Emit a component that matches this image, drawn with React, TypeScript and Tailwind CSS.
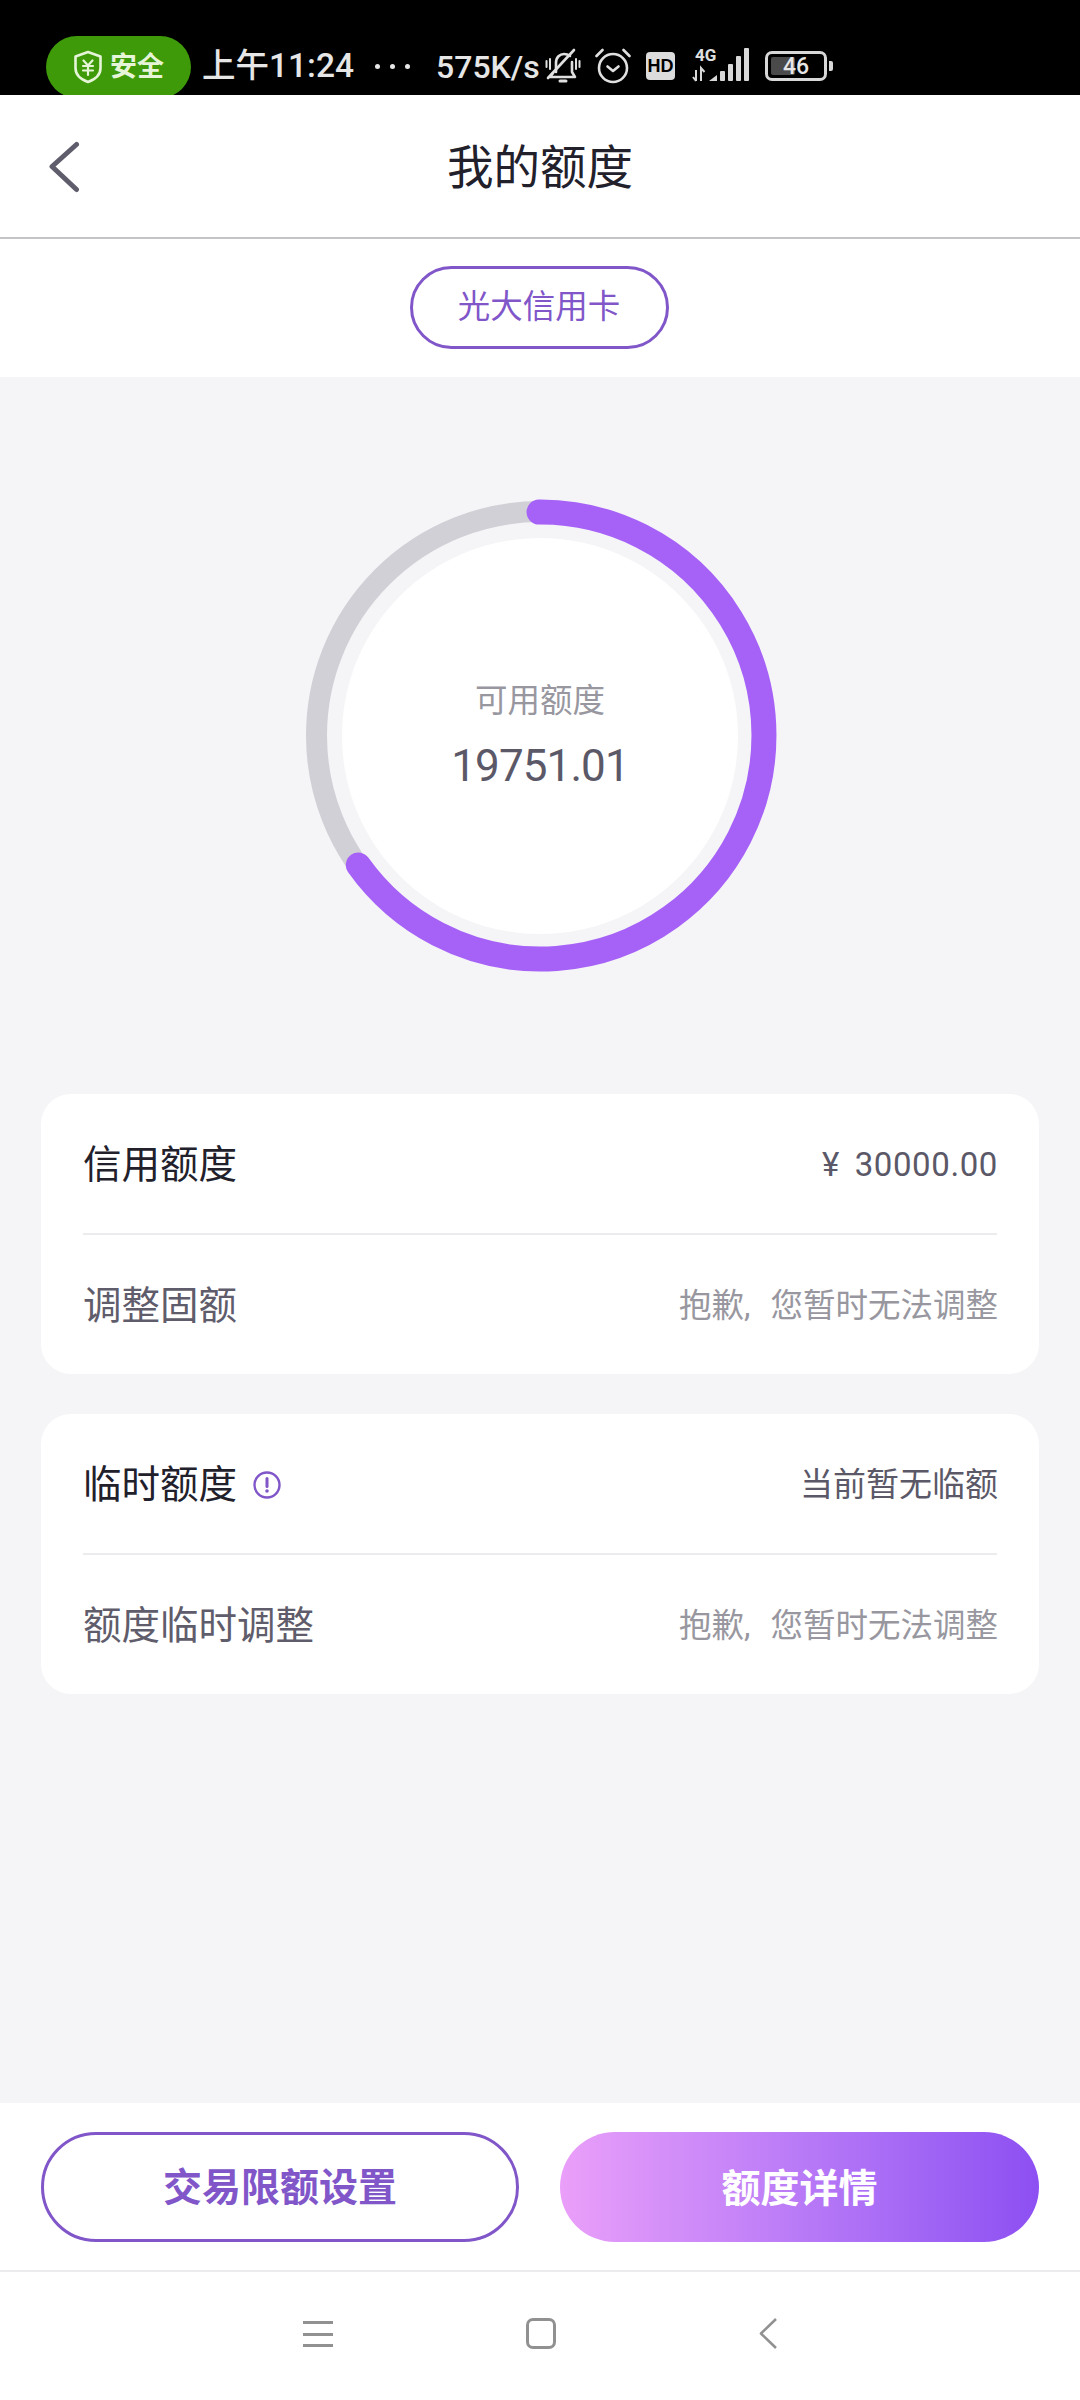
const purple = "#8056c9";

const StatusBar = () => {
    return (
        <div className="h-[95px] bg-black flex items-start overflow-hidden text-[#e6e6e6] shrink-0">
            <div className="mt-[36px] ml-[46px] w-[145px] h-[62px] rounded-[31px] bg-[#3f9a0a] flex items-center justify-center gap-[7px] text-[#e6f5d8]">
                <svg width="30" height="34" viewBox="0 0 30 34" fill="none" stroke="#e6f5d8" strokeWidth="2.6" strokeLinejoin="round" strokeLinecap="round">
                    <path d="M15 2 L27.5 6.5 V18 C27.5 25 22 29.5 15 32 C8 29.5 2.5 25 2.5 18 V6.5 Z" />
                    <path d="M10.5 10.5 L15 15.5 L19.5 10.5 M10 16 H20 M10 20.5 H20 M15 15.5 V25" strokeWidth="2.2" />
                </svg>
                <span className="text-[27px] font-bold leading-none">安全</span>
            </div>
            <span className="ml-[11px] mt-[43px] w-[151px] text-[33.5px] leading-[46px] font-medium whitespace-nowrap">上午11:24</span>
            <div className="ml-[22px] mt-[64px] flex gap-[10px]">
                <div className="w-[5px] h-[5px] rounded-full bg-[#e6e6e6]"></div>
                <div className="w-[5px] h-[5px] rounded-full bg-[#e6e6e6]"></div>
                <div className="w-[5px] h-[5px] rounded-full bg-[#e6e6e6]"></div>
            </div>
            <span className="ml-[26px] mt-[46px] w-[109px] text-[32px] leading-[42px] font-medium whitespace-nowrap">575K/s</span>

            {/* bell off */}
            <svg className="mt-[48px] ml-[0px]" width="36" height="36" viewBox="0 0 36 36" fill="none" stroke="#e0e0e0" strokeWidth="2.6" strokeLinecap="round" strokeLinejoin="round">
                <path d="M11 24 V15 C11 9 15 6 19 6 C21 6 23 6.5 25 8 M27 14 V24 L30 29 H5 L8 25" />
                <path d="M29 2 L3 30" />
                <path d="M15 33 H21" strokeWidth="3" />
                <path d="M1.5 13 V19 M5 11 V21 M31 11 V21 M34.5 13 V19" strokeWidth="2" />
            </svg>

            {/* alarm */}
            <svg className="mt-[48px] ml-[14px]" width="36" height="36" viewBox="0 0 36 36" fill="none" stroke="#e0e0e0" strokeWidth="2.6" strokeLinecap="round" strokeLinejoin="round">
                <circle cx="18" cy="20" r="14" />
                <path d="M12.5 18.5 L18 23 L23.5 18.5" />
                <path d="M1.5 8 L7.5 2 M34.5 8 L28.5 2" />
            </svg>

            <div className="mt-[52px] ml-[15px] w-[29px] h-[28px] rounded-[4px] bg-[#dcdcdc] text-black text-[18px] leading-[28px] font-bold text-center font-['Liberation_Sans',sans-serif]">HD</div>

            {/* 4G + signal */}
            <div className="mt-[48px] ml-[17px] w-[58px] h-[34px] relative">
                <span className="absolute left-[3px] top-[-2px] text-[17px] leading-[18px] font-bold text-[#e0e0e0]">4G</span>
                <svg className="absolute left-0 top-0" width="58" height="34" viewBox="0 0 58 34" fill="none">
                    <path d="M4 22 V33 M1 29 L4 33 M9 33 V20 L12.5 24" stroke="#d8d8d8" strokeWidth="2" />
                    <path d="M17 33 L25 27 V33 Z" fill="#d8d8d8" />
                    <rect x="28" y="23" width="5" height="10" rx="1" fill="#d8d8d8" />
                    <rect x="36" y="16" width="5" height="17" rx="1" fill="#d8d8d8" />
                    <rect x="44" y="8" width="5" height="25" rx="1" fill="#d8d8d8" />
                    <rect x="52" y="0" width="5" height="33" rx="1" fill="#d8d8d8" />
                </svg>
            </div>

            {/* battery */}
            <div className="mt-[51px] ml-[15px] w-[62px] h-[30px] rounded-[7px] border-[3px] border-[#d8d8d8] relative flex items-center justify-center">
                <div className="absolute left-[3px] top-[3px] bottom-[3px] w-[24px] rounded-[2px] bg-[#4a4a4a]"></div>
                <span className="relative text-[23px] leading-none font-medium text-[#e6e6e6]">46</span>
            </div>
            <div className="mt-[61px] ml-[2px] w-[4px] h-[10px] rounded-r-[2px] bg-[#d8d8d8]"></div>
        </div>
    );
};

const InfoIcon = () => {
    return (
        <svg width="28" height="28" viewBox="0 0 28 28" fill="none">
            <circle cx="14" cy="14" r="12.5" stroke={purple} strokeWidth="2.4" />
            <path d="M14 7.5 V15.5" stroke={purple} strokeWidth="3" strokeLinecap="round" />
            <circle cx="14" cy="20" r="1.8" fill={purple} />
        </svg>
    );
};

const Gauge = () => {
    return (
        <div className="relative w-[473px] h-[473px] mx-auto flex items-center justify-center">
            <svg className="absolute inset-0" width="473" height="473" viewBox="0 0 473 473" fill="none">
                <circle cx="236.5" cy="236.5" r="224" stroke="#d1d0d6" strokeWidth="21" />
                <path d="M235 13 A223.5 223.5 0 1 1 54.3 366" stroke="#a662f7" strokeWidth="25" strokeLinecap="round" />
            </svg>
            <div className="relative w-[396px] h-[396px] rounded-full bg-white flex flex-col items-center justify-center gap-[15px]">
                <span className="text-[32.5px] leading-[44px] text-[#98979f] mt-[1px]">可用额度</span>
                <span className="text-[44px] leading-[56px] tracking-[-0.9px] text-[#5b5868] font-['Roboto',sans-serif]">19751.01</span>
            </div>
        </div>
    );
};

const Row = ({ label, labelClass, icon, value, valueClass }: { label: string; labelClass: string; icon?: boolean; value: string; valueClass: string }) => {
    return (
        <div className="h-[139px] flex items-center justify-between pl-[42px] pr-[41px] pt-[2px]">
            <div className="flex items-center gap-[16px]">
                <span className={labelClass}>{label}</span>
                {icon && <InfoIcon />}
            </div>
            <span className={valueClass}>{value}</span>
        </div>
    );
};

const labelDark = "text-[38.5px] leading-[50px] text-[#22202b]";
const labelGray = "text-[38.5px] leading-[50px] text-[#5f5c6b]";
const valueDark = "text-[33px] leading-[44px] text-[#5b5868]";
const valueGray = "text-[32.5px] leading-[44px] text-[#98979f] [word-spacing:12px]";

const App = () => {
    return (
        <div className="w-[1080px] h-[2400px] flex flex-col bg-white font-['Roboto','Noto_Sans_CJK_SC',sans-serif]">
            <StatusBar />

            {/* header */}
            <div className="h-[144px] shrink-0 relative flex items-center justify-center border-b-[2px] border-[#c4c4c6]">
                <svg className="absolute left-[48px] top-[46px]" width="32" height="52" viewBox="0 0 32 52" fill="none">
                    <path d="M28.5 3.5 L4 25.5 L28.5 48.5" stroke="#5f5c6b" strokeWidth="5" strokeLinecap="round" strokeLinejoin="round" />
                </svg>
                <h1 className="text-[46.5px] leading-[60px] text-[#22202b] mt-[3px]">我的额度</h1>
            </div>

            {/* card switch */}
            <div className="h-[138px] shrink-0 flex justify-center pt-[27px]">
                <div className="w-[259px] h-[83px] rounded-[42px] border-[3px] border-[#8056c9] flex items-center justify-center text-[32.5px] text-[#8056c9] mr-[2px]">
                    光大信用卡
                </div>
            </div>

            <div className="flex-1 bg-[#f5f5f7] pt-[122px] px-[41px]">
                <Gauge />

                <div className="mt-[122px] bg-white rounded-[30px]">
                    <Row label="信用额度" labelClass={labelDark} value="¥ 30000.00" valueClass={valueDark + " tracking-[0.6px] [word-spacing:6px]"} />
                    <div className="mx-[42px] h-[2px] bg-[#ececee]"></div>
                    <Row label="调整固额" labelClass={labelGray} value="抱歉, 您暂时无法调整" valueClass={valueGray} />
                </div>

                <div className="mt-[40px] bg-white rounded-[30px]">
                    <Row label="临时额度" labelClass={labelDark} icon value="当前暂无临额" valueClass={valueDark} />
                    <div className="mx-[42px] h-[2px] bg-[#ececee]"></div>
                    <Row label="额度临时调整" labelClass={labelGray} value="抱歉, 您暂时无法调整" valueClass={valueGray} />
                </div>
            </div>

            {/* bottom buttons */}
            <div className="h-[169px] shrink-0 flex justify-between px-[41px] pt-[29px] border-b-[2px] border-[#ececee]">
                <div className="w-[478px] h-[110px] rounded-[55px] border-[3px] border-[#8056c9] flex items-center justify-center pt-[3px] text-[39px] font-bold text-[#8056c9]">
                    交易限额设置
                </div>
                <div className="w-[479px] h-[110px] rounded-[55px] bg-gradient-to-r from-[#ea9ff9] to-[#8d4ff2] flex items-center justify-center pt-[4px] text-[39px] font-bold text-white">
                    额度详情
                </div>
            </div>

            {/* nav bar */}
            <div className="h-[128px] shrink-0 flex justify-center items-start pt-[46px]">
                <div className="w-[30px] h-[26px] mt-[3px] flex flex-col justify-between">
                    <div className="h-[3px] bg-[#919191]"></div>
                    <div className="h-[3px] bg-[#919191]"></div>
                    <div className="h-[3px] bg-[#919191]"></div>
                </div>
                <div className="ml-[193px] w-[30px] h-[31px] rounded-[7px] border-[3px] border-[#919191]"></div>
                <svg className="ml-[203px]" width="18" height="31" viewBox="0 0 18 31" fill="none">
                    <path d="M17 1 L2 15.5 L17 30" stroke="#919191" strokeWidth="2.6" strokeLinejoin="round" />
                </svg>
            </div>
        </div>
    );
};

export default App;
